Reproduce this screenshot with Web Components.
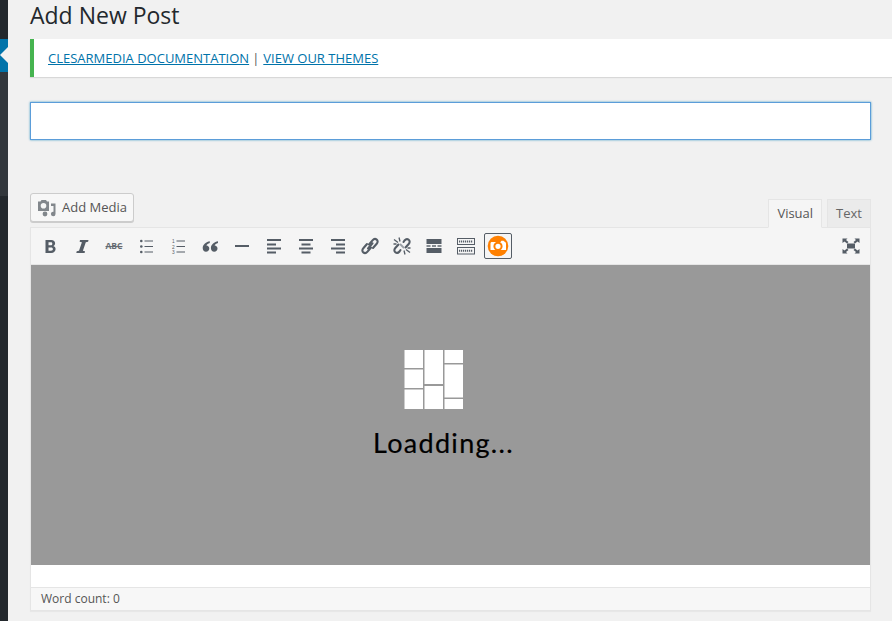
<!DOCTYPE html>
<html><head><meta charset="utf-8">
<style>
html,body{margin:0;padding:0;height:621px;overflow:hidden;background:#f1f1f1}
body{font-family:"Open Sans","Liberation Sans",sans-serif;font-size:13px;color:#444}
</style></head><body>
<wp-shell>
  <wp-sidebar slot="side"></wp-sidebar>
  <wp-heading>Add New Post</wp-heading>
  <wp-notice><a>CLESARMEDIA DOCUMENTATION</a><i>|</i><a>VIEW OUR THEMES</a></wp-notice>
  <wp-title-input></wp-title-input>
  <wp-editor></wp-editor>
</wp-shell>
<script>
function def(name,html,init){customElements.define(name,class extends HTMLElement{
  constructor(){super();this.attachShadow({mode:'open'}).innerHTML=html;}
  connectedCallback(){init&&init(this);}
});}
def('wp-shell',`<style>
:host{display:flex;height:621px}
.main{flex:1;min-width:0;display:flex;flex-direction:column}
</style><slot name="side"></slot><div class="main"><slot></slot></div>`);

def('wp-sidebar',`<style>
:host{display:flex;flex-direction:column;width:8px;height:621px;background:#23282d;flex:none;position:relative;z-index:2}
.top{height:39px}
.cur{height:33px;background:#0073aa;position:relative}
.cur:after{content:"";position:absolute;left:0;top:8px;width:0;height:0;border:8px solid transparent;border-left-width:0;border-right-color:#f1f1f1}
.sub{height:124px;background:#32373c}
</style><div class="top"></div><div class="cur"></div><div class="sub"></div>`);

def('wp-heading',`<style>
:host{display:block;height:39px;box-sizing:border-box;margin-left:22px;font:400 23px/31px "Open Sans",sans-serif;color:#23282d}
</style><slot></slot>`);

def('wp-notice',`<style>
:host{display:block;height:38px;box-sizing:border-box;margin-left:22px;background:#fff;border-left:4px solid #46b450;box-shadow:0 1px 1px rgba(0,0,0,.1);padding:0 0 0 14px;font:400 13px/38px "Open Sans",sans-serif;color:#0073aa;white-space:nowrap}
::slotted(a){color:#0073aa;text-decoration:underline}
::slotted(i){font-style:normal;color:#555;margin:0 4px 0 3px}
</style><slot></slot>`);

def('wp-title-input',`<style>
:host{display:block;margin:25px 21px 0 22px;height:38px;box-sizing:border-box;background:#fff;border:1px solid #5b9dd9;box-shadow:0 0 2px rgba(30,140,190,.8)}
</style>`);

const C='#555d66';
const ic=(d)=>`<svg width="20" height="20" viewBox="0 0 20 20" fill="${C}">${d}</svg>`;
const bars=(rows)=>rows.map(r=>`<rect x="${r[0]}" y="${r[1]}" width="${r[2]}" height="${r[3]||2}"/>`).join('');
const listBars=bars([[8.5,4.5,8.5,1],[8.5,10,8.5,1],[8.5,15.5,8.5,1]]);
const num=(n,y)=>`<text x="4" y="${y}" font-size="4.8" font-family="Liberation Sans">${n}</text>`;
const chain=`<g fill="none" stroke="${C}" stroke-width="2.1" stroke-linecap="round" stroke-linejoin="round">`;
const tools=[
 ic('<path d="M5.500 4h5.700c2.600 0 3.900 1.300 3.900 3.200 0 1.400-.7 2.400-1.900 2.800 1.500.4 2.400 1.500 2.400 3.100 0 2.400-1.700 3.900-4.400 3.900H5.500V4zm3 2.300v2.900h2.200c1.100 0 1.600-.5 1.600-1.500s-.5-1.400-1.600-1.400H8.500zm0 5.100v3.300h2.500c1.300 0 1.900-.6 1.900-1.700s-.6-1.600-1.900-1.600H8.500z"/>'),
 ic('<path d="M8 4h8.500l-.4 1.700-2.300.6L10.900 14.700l2.100.6-.4 1.700H4.300l.4-1.700 2.300-.6L9.900 6.300 7.600 5.700z"/>'),
 `<span class="abc">ABC</span>`,
 ic('<circle cx="5.300" cy="5" r="1.300"/><circle cx="5.300" cy="10.500" r="1.300"/><circle cx="5.300" cy="16" r="1.300"/>'+listBars),
 ic(num(1,7)+num(2,12.500)+num(3,18)+listBars),
 ic('<path d="M9.800 5.200C6.300 5.800 2.700 8.200 2.700 12c0 2.300 1.400 3.700 3.300 3.700s3.300-1.400 3.300-3.200c0-1.700-1.200-2.900-2.900-3 .4-1 1.700-1.900 3.400-2.400zM18 5.200c-3.500.6-7.100 3-7.100 6.800 0 2.300 1.400 3.700 3.300 3.700s3.300-1.400 3.300-3.200c0-1.700-1.200-2.900-2.900-3 .4-1 1.700-1.900 3.400-2.400z"/>'),
 ic(bars([[3,9,14,2]])),
 ic(bars([[3,3,14,2],[3,7.500,9,2],[3,11.500,14,2],[3,15.500,9,2]])),
 ic(bars([[3,3,14,2],[5.500,7.500,9,2],[3,11.500,14,2],[5.500,15.500,9,2]])),
 ic(bars([[3,3,14,2],[8,7.500,9,2],[3,11.500,14,2],[8,15.500,9,2]])),
 ic(chain+'<path d="M9 8.500l3.500-4.200c1.300-1.500 3-1.700 4.200-.7s1.300 2.800 0 4.200L13 12"/><path d="M11 11.500l-3.500 4.200c-1.300 1.500-3 1.700-4.200.7s-1.300-2.800 0-4.200L7 8"/><path d="M8 12.500l4.500-5.200"/></g>'),
 ic(chain+'<path d="M11.500 6l1-1.500c1.300-1.500 3-1.700 4.200-.7s1.300 2.800 0 4.200L13.500 11.500"/><path d="M8.500 14l-1 1.500c-1.300 1.500-3 1.700-4.200.7s-1.300-2.800 0-4.200L6.500 8.500"/></g>'+`<g stroke="${C}" stroke-width="1.300"><path d="M2 3.500l4 3M7 1.500l1 4M1.500 8h3M18 16.500l-4-3M13 18.500l-1-4M18.500 12h-3"/></g><path d="M8 8l4 4" stroke="#9aa0a6" stroke-width="1.800"/>`),
 ic(bars([[2.500,3,15,5],[2.500,12,15,5],[2.500,9.300,4,1.400],[8,9.300,4,1.400],[13.500,9.300,4,1.400]])),
 `<svg width="20" height="20" viewBox="0 0 20 20" fill="none" stroke="${C}"><rect x="1.500" y="2.500" width="17" height="6"/><rect x="1.500" y="11.500" width="17" height="6.500"/><path stroke-width="2" stroke-dasharray="1.200 .8" d="M3 5.500h14M3 14.700h14"/></svg>`,
];
def('wp-editor',`<style>
:host{display:block;margin:53px 21px 0 22px;position:relative}
.bar{display:flex;justify-content:space-between;align-items:flex-end;height:34px}
.media{box-sizing:border-box;width:104px;height:29px;margin-bottom:5px;background:#f7f7f7;border:1px solid #ccc;border-radius:3px;box-shadow:0 1px 0 #ccc;display:flex;align-items:center;padding-left:7px;gap:6px;color:#555;font-size:13px;line-height:26px}
.media span{position:relative;top:-1px}
.tabs{display:flex;gap:5px;margin-bottom:-1px;position:relative;z-index:1}
.tab{box-sizing:border-box;height:29px;border:1px solid #e5e5e5;background:#ebebeb;color:#666;font-size:13px;line-height:27px;padding:0 8px}
.tab.on{background:#f5f5f5;border-bottom-color:#f5f5f5;color:#555}
.frame{border:1px solid #e5e5e5;box-shadow:0 1px 1px rgba(0,0,0,.04);background:#fff}
.tb{display:flex;align-items:center;height:36px;background:#f5f5f5;border-bottom:1px solid #e5e5e5;padding-left:3px}
.t{width:32px;height:26px;display:flex;align-items:center;justify-content:center;flex:none}
.abc{font:700 8.500px/1 "Open Sans",sans-serif;color:#666c73;text-decoration:line-through}
.cam{width:28px;height:26px;box-sizing:border-box;border:1px solid #555d66;border-radius:2px;background:#f5f5f5;display:flex;align-items:center;justify-content:center;margin-left:2px;flex:none}
.full{margin-left:auto;margin-right:9px;display:flex}
.load{height:300px;background:#999;display:flex;flex-direction:column;align-items:flex-start}
.logo{margin-top:85px;margin-left:373px;display:block}
.txt{font:400 27px/1 "Lato",sans-serif;color:#000;letter-spacing:1.300px;-webkit-text-stroke:.2px #000;margin-top:19px;margin-left:342px}
.blank{height:22px;background:#fff}
.st{height:22px;border-top:1px solid #e5e5e5;background:#f7f7f7;padding-left:10px;font-size:12px;line-height:22px;color:#555}
</style>
<div class="bar">
  <div class="media"><svg width="18" height="18" viewBox="0 0 18 18" fill="#82878c"><path d="M0 2.500h2.500l1-1.500h4.500l1 1.500H11V12H0zM5.500 4a2.800 2.800 0 1 0 0 5.600 2.800 2.800 0 0 0 0-5.600z"/><path d="M13 4.500h4.500V15a2.300 2.300 0 1 1-2-2.300V7h-2.500z"/><circle cx="7" cy="15" r="2.400"/></svg><span>Add Media</span></div>
  <div class="tabs"><div class="tab on">Visual</div><div class="tab">Text</div></div>
</div>
<div class="frame">
  <div class="tb" id="tb"></div>
  <div class="load">
    <svg class="logo" width="60" height="60" viewBox="0 0 60 60" fill="#fff">
      <rect x="0.500" y="0" width="18.500" height="18"/><rect x="0.500" y="19.500" width="18.500" height="18.500"/><rect x="0.500" y="39.500" width="18.500" height="19.500"/>
      <rect x="20.500" y="0" width="18.500" height="34"/><rect x="20.500" y="36" width="18.500" height="23"/>
      <rect x="40.500" y="0" width="18.500" height="13"/><rect x="40.500" y="14.500" width="18.500" height="33"/><rect x="40.500" y="49" width="18.500" height="10"/>
    </svg>
    <div class="txt">Loadding...</div>
  </div>
  <div class="blank"></div>
  <div class="st">Word count: 0</div>
</div>`,el=>{
  const tb=el.shadowRoot.getElementById('tb');
  tb.innerHTML=tools.map(t=>`<div class="t">${t}</div>`).join('')+
  `<div class="cam"><svg width="24" height="24" viewBox="0 0 24 24"><circle cx="12" cy="12" r="10.300" fill="#ff8000"/><path d="M4.500 9.500c0-1 .6-1.500 1.500-1.500h8.500l1-1.200h2l1.500 1.200c.6.300 1 .8 1 1.500v6.500H4.500z" fill="#fff"/><circle cx="12" cy="12.300" r="3.600" fill="none" stroke="#ff8000" stroke-width="2"/></svg></div>
  <div class="full"><svg width="20" height="20" viewBox="0 0 20 20" fill="${C}"><rect x="6" y="7.500" width="8" height="5"/><path d="M1.500 2.500h5L5 4l2.500 2L6 7.500 3.500 5.500 1.500 7zM18.500 2.500v4.500l-2-1.500L14 7.500 12.500 6 15 4l-1.500-1.500zM1.500 17.500V13l2 1.500L6 12.500 7.500 14 5 16l1.500 1.500zM18.500 17.500h-5L15 16l-2.500-2 1.500-1.500 2.500 2 2-1.500z"/></svg></div>`;
});
</script>
</body></html>
